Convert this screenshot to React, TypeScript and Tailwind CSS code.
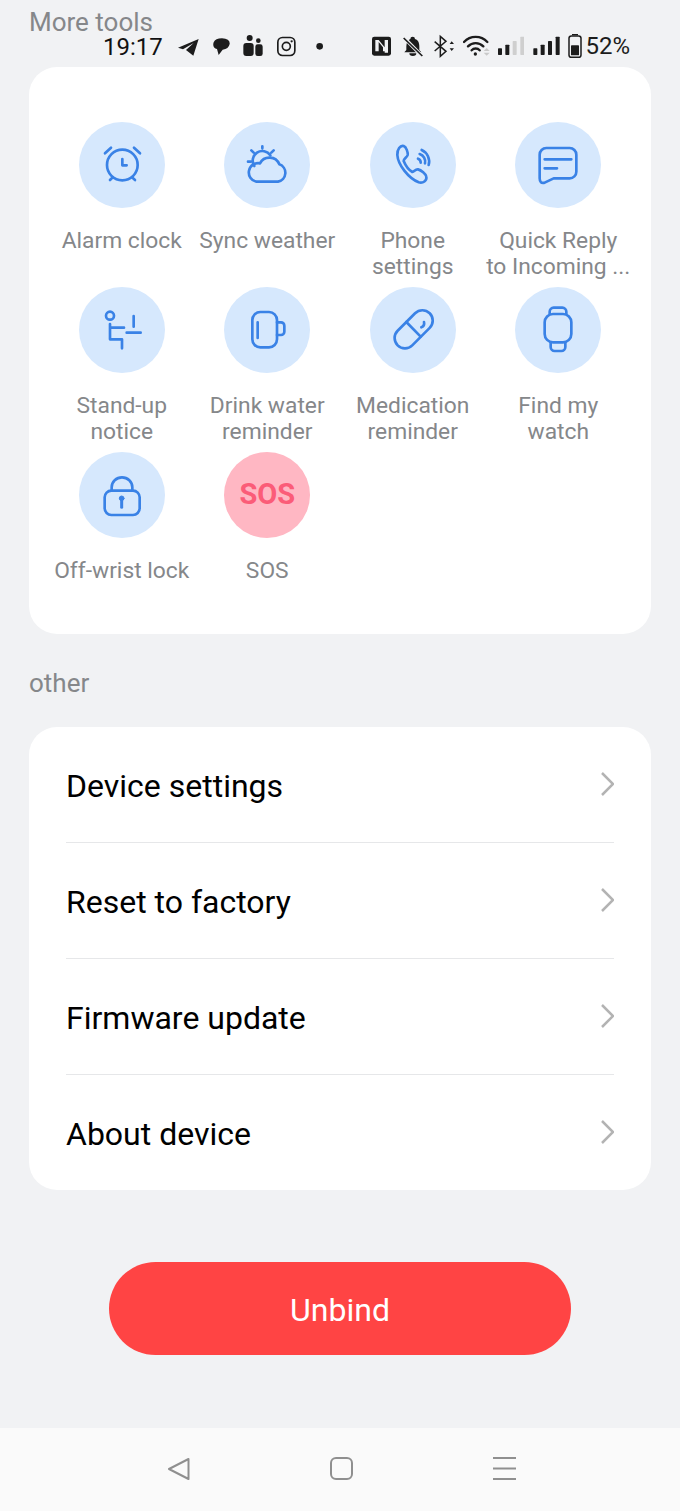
import type { ReactNode } from "react"

// icons are traced 3x, so viewBox is 144 units for a 48px box
function ToolIcon({ cx, cy, children }: { cx: number; cy: number; children: ReactNode }) {
  return (
    <svg
      width={48}
      height={48}
      viewBox={`${cx - 72} ${cy - 72} 144 144`}
      fill="none"
      stroke="#3a82e6"
      strokeWidth={8}
      strokeLinecap="round"
      strokeLinejoin="round"
    >
      {children}
    </svg>
  )
}

const tools: { label: string[]; icon: ReactNode }[] = [
  {
    label: ["Alarm clock"],
    icon: (
      <ToolIcon cx={186} cy={165}>
        <circle cx={187} cy={165} r={46} />
        <path d="M187 147v19h13M135 130l18-17M240 130l-18-17M150 210l8-8M225 210l-9-8" />
      </ToolIcon>
    ),
  },
  {
    label: ["Sync weather"],
    icon: (
      <ToolIcon cx={622} cy={165}>
        <path d="M590 215H655a27 27 0 0 0 4-52A32 32 0 0 0 601 160A28 28 0 0 0 590 215Z" />
        <path d="M584 168A26 26 0 0 1 632 136M608 109v6M575 121l7 7M642 121l-7 7M565 155h8" />
      </ToolIcon>
    ),
  },
  {
    label: ["Phone", "settings"],
    icon: (
      <ToolIcon cx={188} cy={165}>
        <path d="M160 108C150 105 140 118 141 135C143 165 175 205 205 217C218 221 230 212 228 200C227 192 212 180 203 178C195 177 192 185 186 186C175 180 165 165 160 153C160 146 170 142 172 135C173 127 168 111 160 108Z" />
        <path d="M203 146a12 12 0 0 1 8 12M208 132a24 24 0 0 1 16 28M214 120a38 38 0 0 1 21 45" />
      </ToolIcon>
    ),
  },
  {
    label: ["Quick Reply", "to Incoming ..."],
    icon: (
      <ToolIcon cx={625} cy={165}>
        <path d="M590 114H660a20 20 0 0 1 20 20V185a20 20 0 0 1-20 20H612L585 218Q570 222 570 205V134a20 20 0 0 1 20-20Z" />
        <path d="M585 148H665M585 175H622" />
      </ToolIcon>
    ),
  },
  {
    label: ["Stand-up", "notice"],
    icon: (
      <ToolIcon cx={186} cy={150}>
        <circle cx={150} cy={107} r={12} />
        <path d="M150 132V178H186V205M150 143H192M200 158H242M221 108V140" />
      </ToolIcon>
    ),
  },
  {
    label: ["Drink water", "reminder"],
    icon: (
      <ToolIcon cx={622} cy={148}>
        <rect x={578} y={94} width={74} height={106} rx={24} />
        <path d="M652 125h12a10 10 0 0 1 10 10v18a10 10 0 0 1-10 10h-12M594 125V172" />
      </ToolIcon>
    ),
  },
  {
    label: ["Medication", "reminder"],
    icon: (
      <ToolIcon cx={188} cy={150}>
        <rect x={122} y={117} width={136} height={62} rx={31} transform="rotate(-45 190 148)" />
        <path d="M168 126L211 170M213 142a14 14 0 0 0 8-16" />
      </ToolIcon>
    ),
  },
  {
    label: ["Find my", "watch"],
    icon: (
      <ToolIcon cx={625} cy={150}>
        <rect x={585} y={102} width={80} height={85} rx={25} />
        <path d="M600 102V95a12 12 0 0 1 12-12h26a12 12 0 0 1 12 12V102M603 187v14a12 12 0 0 0 12 12h20a12 12 0 0 0 12-12v-14" />
      </ToolIcon>
    ),
  },
  {
    label: ["Off-wrist lock"],
    icon: (
      <ToolIcon cx={186} cy={150}>
        <rect x={134} y={137} width={105} height={73} rx={20} />
        <path d="M155 135v-8a31 30 0 0 1 62 0v8" />
        <circle cx={185} cy={160} r={7} fill="#3a82e6" strokeWidth={3} />
        <path d="M185 165v22" strokeWidth={9} />
      </ToolIcon>
    ),
  },
]

function ToolLabel({ lines }: { lines: string[] }) {
  return (
    <div className="mt-[20px] whitespace-nowrap text-[22.8px] leading-[26px] text-[#85878a]">
      {lines.map((l) => (
        <div key={l}>{l}</div>
      ))}
    </div>
  )
}

function ToolItem({ label, icon }: { label: string[]; icon: ReactNode }) {
  return (
    <div className="flex flex-col items-center text-center">
      <div className="flex size-[86px] shrink-0 items-center justify-center rounded-full bg-[#d6e8fd]">{icon}</div>
      <ToolLabel lines={label} />
    </div>
  )
}

function StatusIcon({ x, w, fill, children }: { x: number; w: number; fill?: string; children: ReactNode }) {
  return (
    <svg width={w / 3} height={25} viewBox={`${x} 100 ${w} 75`} fill={fill ?? "#1c1c1c"} className="block shrink-0">
      {children}
    </svg>
  )
}

function StatusBar() {
  return (
    <div className="absolute left-[103px] top-[34px] flex h-[25px] items-center">
      <span className="mt-[1px] w-[60px] text-[24px] leading-[25px] text-[#111111]">19:17</span>
      <div className="ml-[15px]">
        <StatusIcon x={538} w={62}>
          <path d="M538 141L600 115L584 165L562 148L585 127L553 146Z" />
        </StatusIcon>
      </div>
      <div className="ml-[13px]">
        <StatusIcon x={640} w={56}>
          <path d="M645 125Q650 113 670 113Q695 115 693 130Q690 145 672 147L660 163L655 145Q640 140 645 125Z" />
        </StatusIcon>
      </div>
      <div className="ml-[13px]">
        <StatusIcon x={736} w={60}>
          <circle cx={756} cy={112} r={9} />
          <circle cx={782} cy={120} r={7} />
          <rect x={737} y={127} width={31} height={39} rx={9} />
          <rect x={773} y={131} width={22} height={35} rx={7} />
        </StatusIcon>
      </div>
      <div className="ml-[14px]">
        <StatusIcon x={836} w={56} fill="none">
          <rect x={838.5} y={110.5} width={51} height={54} rx={14} stroke="#1c1c1c" strokeWidth={5} />
          <circle cx={864} cy={137} r={12} stroke="#1c1c1c" strokeWidth={5} />
          <circle cx={880} cy={122} r={3.5} fill="#1c1c1c" />
        </StatusIcon>
      </div>
      <div className="ml-[20px]">
        <StatusIcon x={950} w={22}>
          <circle cx={961} cy={137} r={10} />
        </StatusIcon>
      </div>
      <div className="ml-[49px]">
        <StatusIcon x={98} w={57}>
          <rect x={98} y={108} width={57} height={57} rx={7} />
          <path d="M108 118h10l18 22v-22h10v38h-10v-4h-5v-12l-13-16v28h-10Z" fill="#f1f2f4" />
        </StatusIcon>
      </div>
      <div className="ml-[12px]">
        <StatusIcon x={188} w={58}>
          <path d="M217 108a7 7 0 0 1 7 7c10 3 13 12 13 24v9l6 7H192l6-7v-11c0-12 5-19 12-22a7 7 0 0 1 7-7ZM207 158h21a10.500 8 0 0 1-21 0Z" />
          <path d="M192 112L242 163" stroke="#f1f2f4" strokeWidth={10} />
          <path d="M190 112L246 166" stroke="#1c1c1c" strokeWidth={5} />
        </StatusIcon>
      </div>
      <div className="ml-[11px]">
        <StatusIcon x={278} w={62}>
          <path d="M280 123L314 152L297 167V107L314 122L280 151" fill="none" stroke="#1c1c1c" strokeWidth={4.500} />
          <path d="M325 130l6-8l7 8ZM325 143l6 8l7-8Z" />
        </StatusIcon>
      </div>
      <div className="ml-[9px]">
        <StatusIcon x={370} w={82}>
          <path d="M373 124a48 48 0 0 1 70 0M385 137a32 32 0 0 1 46 0M396 149a16 16 0 0 1 24 0" fill="none" stroke="#1c1c1c" strokeWidth={7} strokeLinecap="round" />
          <circle cx={407} cy={160} r={5} />
          <path d="M432 151l9-9l9 9Z" fill="#c9c9c9" />
          <path d="M432 156l9 9l9-9Z" fill="#c9c9c9" />
        </StatusIcon>
      </div>
      <div className="ml-[7px]">
        <StatusIcon x={473} w={80}>
          <rect x={473} y={143} width={12} height={20} rx={2} />
          <rect x={495} y={132} width={12} height={31} rx={2} />
          <rect x={517} y={121} width={12} height={42} rx={2} fill="#cfcfcf" />
          <rect x={540} y={108} width={12} height={55} rx={2} fill="#cfcfcf" />
        </StatusIcon>
      </div>
      <div className="ml-[9px]">
        <StatusIcon x={580} w={82}>
          <rect x={581} y={143} width={12} height={20} rx={2} />
          <rect x={603} y={132} width={12} height={31} rx={2} />
          <rect x={625} y={121} width={12} height={42} rx={2} />
          <rect x={648} y={108} width={12} height={55} rx={2} />
        </StatusIcon>
      </div>
      <div className="ml-[7px]">
        <StatusIcon x={682} w={42}>
          <rect x={685} y={106} width={36} height={64} rx={7} fill="none" stroke="#1c1c1c" strokeWidth={4.500} />
          <rect x={694} y={98} width={18} height={6} />
          <rect x={691} y={134} width={24} height={30} rx={2} />
        </StatusIcon>
      </div>
      <span className="ml-[4px] text-[24px] leading-[25px] text-[#1c1c1c]">52%</span>
    </div>
  )
}

const settings = ["Device settings", "Reset to factory", "Firmware update", "About device"]

function SettingRow({ label, last }: { label: string; last: boolean }) {
  return (
    <div className={`flex h-[116px] items-center justify-between pt-[2px] ${last ? "" : "border-b border-[#e6e7e9]"}`}>
      <span className="text-[32px] leading-none text-black">{label}</span>
      <svg width={14} height={26} viewBox="0 0 14 26" fill="none" stroke="#b3b3b3" strokeWidth={2.500} className="mb-[4px]">
        <path d="M2 2l11 11L2 24" />
      </svg>
    </div>
  )
}

export default function App() {
  return (
    <div className="relative flex h-[1511px] w-[680px] flex-col overflow-hidden bg-[#f1f2f4] font-['Roboto',sans-serif]">
      <StatusBar />
      <div className="h-[67px] pl-[29px] pt-[7px] text-[26px] leading-[30px] text-[#85878a]">More tools</div>

      <div className="mx-[29px] h-[567px] rounded-[28px] bg-white px-[20px] pt-[55px]">
        <div className="grid grid-cols-4 auto-rows-[165px]">
          {tools.map((t) => (
            <ToolItem key={t.label.join(" ")} label={t.label} icon={t.icon} />
          ))}
          <div className="flex flex-col items-center text-center">
            <div className="flex size-[86px] shrink-0 items-center justify-center rounded-full bg-[#ffb7c3] text-[29px] font-bold text-[#fb5c78]">
              SOS
            </div>
            <ToolLabel lines={["SOS"]} />
          </div>
        </div>
      </div>

      <div className="mt-[34px] h-[59px] pl-[29px] text-[26px] leading-[30px] text-[#85878a]">other</div>

      <div className="mx-[29px] h-[463px] rounded-[28px] bg-white px-[37px]">
        {settings.map((s, i) => (
          <SettingRow key={s} label={s} last={i === settings.length - 1} />
        ))}
      </div>

      <button className="mx-auto mt-[72px] flex h-[93px] w-[462px] items-center justify-center rounded-full bg-[#ff4444] pt-[2px] text-[32px] text-white">
        Unbind
      </button>

      <div className="mt-auto flex h-[83px] items-center justify-center gap-[140px] bg-[#fafafa] pl-[2px] pb-[2px]">
        <svg width={23} height={24} viewBox="0 0 23 24" fill="none" stroke="#8f8f8f" strokeWidth={2} strokeLinejoin="round">
          <path d="M21.500 2L2 12l19.500 10Z" />
        </svg>
        <svg width={23} height={23} viewBox="0 0 23 23" fill="none" stroke="#8f8f8f" strokeWidth={2}>
          <rect x={1} y={1} width={21} height={21} rx={5} />
        </svg>
        <svg width={23} height={23} viewBox="0 0 23 23" fill="none" stroke="#8f8f8f" strokeWidth={2}>
          <path d="M0 1h23M0 11.500h23M0 22h23" />
        </svg>
      </div>
    </div>
  )
}
